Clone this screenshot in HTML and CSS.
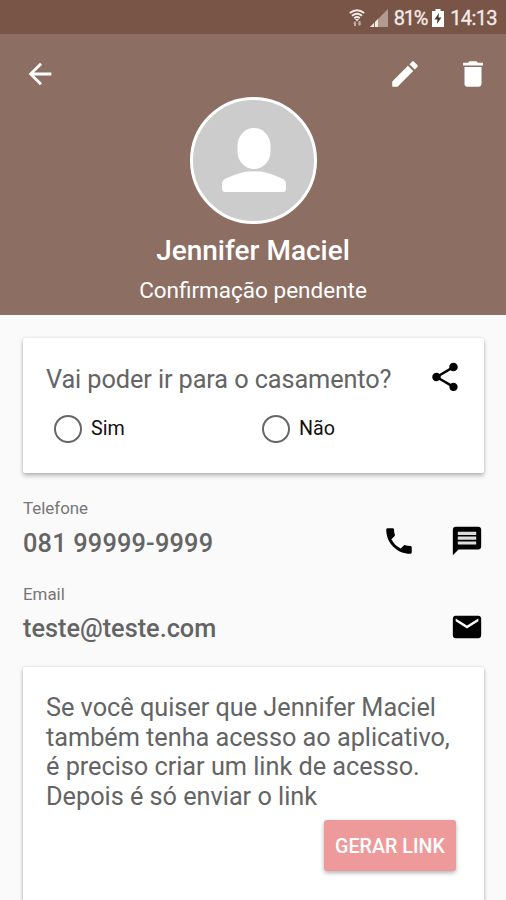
FILE: index.html
```html
<!DOCTYPE html>
<html lang="pt-BR">
<head>
    <meta charset="UTF-8">
    <meta name="viewport" content="width=device-width, initial-scale=1.0">
    <title>Jennifer Maciel</title>
    <link rel="stylesheet" href="styles.css">
</head>
<body>

    <!-- Status bar -->
    <div class="status-bar">
        <svg class="status-wifi" viewBox="0 0 16 18">
            <g fill="none" stroke="#f3e9e4" stroke-width="1.9">
                <path d="M0.8 4Q8-1.5 15.2 4"/>
                <path d="M3 6.8Q8 2.8 13 6.8"/>
                <path d="M5.2 9.2Q8 7 10.8 9.2"/>
            </g>
            <path fill="#f3e9e4" d="M6 10h4l-2 2.600z"/>
            <path fill="#c3aaa0" d="M4 14.500l2-2.500 1.600 2.500H7v2.500H5v-2.500zM8.500 14.500h1V12h2v2.500h1l-2 2.500z"/>
        </svg>
        <svg class="status-signal" viewBox="0 0 18 18">
            <path fill="#b39a90" d="M18 0v18H0z"/>
            <path fill="#f3e9e4" d="M8 10v8H0z"/>
            <path fill="none" stroke="#795548" stroke-width="0.8" d="M4.500 12v6"/>
        </svg>
        <span class="status-text battery-level">81%</span>
        <svg class="status-battery" viewBox="0 0 12 18">
            <path fill="#fff" d="M3.500 0h5v2H12v16H0V2h3.500z"/>
            <path fill="#4e342e" d="M7 4L2.500 10.500h3L4.800 15l4.700-6.500h-3z"/>
        </svg>
        <span class="status-text clock">14:13</span>
    </div>

    <!-- Guest header -->
    <div class="header">
        <div class="toolbar">
            <svg class="icon" viewBox="0 0 24 24"><path d="M20 11H7.830l5.590-5.590L12 4l-8 8 8 8 1.410-1.410L7.830 13H20v-2z"/></svg>
            <div class="toolbar-actions">
                <svg class="icon" viewBox="0 0 24 24"><path d="M3 17.250V21h3.750L17.810 9.940l-3.750-3.750L3 17.250zM20.710 7.040c.39-.39.39-1.020 0-1.410l-2.340-2.340c-.39-.39-1.020-.39-1.410 0l-1.830 1.830 3.750 3.750 1.830-1.830z"/></svg>
                <svg class="icon" viewBox="0 0 24 24"><path d="M6 19c0 1.100.9 2 2 2h8c1.100 0 2-.9 2-2V7H6v12zM19 4h-3.500l-1-1h-5l-1 1H5v2h14V4z"/></svg>
            </div>
        </div>
        <div class="avatar">
            <svg class="avatar-person" viewBox="0 0 64 65">
                <rect x="15.500" y="0" width="33" height="41" rx="16.500" ry="17.500"/>
                <path d="M0 56c0-3 1.500-4.500 5-6C12 47 20 44 26 43.500h12c6 .5 14 3.500 21 6.500 3.500 1.500 5 3 5 6v5c0 2-1 3-3 3H3c-2 0-3-1-3-3z"/>
            </svg>
        </div>
        <h1 class="guest-name">Jennifer Maciel</h1>
        <p class="guest-status">Confirmação pendente</p>
    </div>

    <div class="content">
        <!-- Attendance question -->
        <div class="card question-card">
            <div class="question-row">
                <p class="question">Vai poder ir para o casamento?</p>
                <svg class="icon" viewBox="0 0 24 24"><path d="M18 16.080c-.76 0-1.440.3-1.960.77L8.910 12.700c.05-.23.09-.46.09-.7s-.04-.47-.09-.7l7.050-4.110c.54.5 1.250.81 2.040.81 1.660 0 3-1.340 3-3s-1.340-3-3-3-3 1.340-3 3c0 .24.04.47.09.7L8.040 9.810C7.500 9.310 6.790 9 6 9c-1.660 0-3 1.340-3 3s1.340 3 3 3c.79 0 1.500-.31 2.040-.81l7.120 4.160c-.05.21-.08.43-.08.65 0 1.610 1.310 2.920 2.920 2.920s2.920-1.310 2.920-2.920-1.310-2.920-2.920-2.920z"/></svg>
            </div>
            <div class="options">
                <label class="option"><input type="radio" name="presenca" class="radio">Sim</label>
                <label class="option"><input type="radio" name="presenca" class="radio">Não</label>
            </div>
        </div>

        <!-- Contact details -->
        <div class="contact">
            <div>
                <p class="contact-label">Telefone</p>
                <p class="contact-value phone">081 99999-9999</p>
            </div>
            <div class="contact-actions">
                <svg class="icon" viewBox="0 0 24 24"><path d="M6.620 10.790c1.440 2.830 3.760 5.140 6.590 6.590l2.200-2.200c.27-.27.67-.36 1.020-.24 1.120.37 2.330.57 3.570.57.55 0 1 .45 1 1V20c0 .55-.45 1-1 1-9.390 0-17-7.610-17-17 0-.55.45-1 1-1h3.500c.55 0 1 .45 1 1 0 1.250.2 2.450.57 3.570.11.35.03.74-.25 1.020l-2.200 2.200z"/></svg>
                <svg class="icon" viewBox="0 0 24 24">
                    <path d="M20 2H4c-1.100 0-1.990.9-1.990 2L2 22l4-4h14c1.100 0 2-.9 2-2V4c0-1.100-.9-2-2-2z"/>
                    <path class="chat-lines" d="M5.500 5.500h13v2.300h-13zM5.500 8.900h13v2.300h-13zM5.500 12.300h13v2.200h-13z"/>
                </svg>
            </div>
        </div>
        <div class="contact">
            <div>
                <p class="contact-label">Email</p>
                <p class="contact-value">teste@teste.com</p>
            </div>
            <div class="contact-actions">
                <svg class="icon" viewBox="0 0 24 24"><path d="M20 4H4c-1.100 0-1.990.9-1.990 2L2 18c0 1.100.9 2 2 2h16c1.100 0 2-.9 2-2V6c0-1.100-.9-2-2-2zm0 4l-8 5-8-5V6l8 5 8-5v2z"/></svg>
            </div>
        </div>

        <!-- Access link -->
        <div class="card link-card">
            <p class="link-text">Se você quiser que Jennifer Maciel<br>também tenha acesso ao aplicativo,<br>é preciso criar um link de acesso.<br>Depois é só enviar o link</p>
            <button class="link-button">GERAR LINK</button>
        </div>
    </div>

</body>
</html>
```
FILE: styles.css
```css
* { box-sizing: border-box; }
body {
    margin: 0;
    height: 900px;
    overflow: hidden;
    font-family: Roboto, "Liberation Sans", sans-serif;
    background-color: #fafafa;
    color: #646464;
}
h1, p { margin: 0; }
.icon {
    display: block;
    width: 34px;
    height: 34px;
    flex-shrink: 0;
    fill: #000;
}

.status-bar {
    display: flex;
    align-items: center;
    justify-content: flex-end;
    height: 34px;
    padding: 1px 9px 0 0;
    background-color: #795548;
}
.status-wifi { width: 16px; height: 18px; margin-right: 5px; }
.status-signal { width: 18px; height: 18px; margin-right: 6px; }
.status-battery { width: 12px; height: 18px; margin-right: 6px; }
.status-text {
    font-size: 20px;
    line-height: 24px;
    color: #f6ece7;
    -webkit-text-stroke: 0.3px #f6ece7;
}
.battery-level { margin-right: 5px; letter-spacing: -1.2px; }
.clock { letter-spacing: -0.6px; }

.header {
    display: flex;
    flex-direction: column;
    align-items: center;
    height: 281px;
    background-color: #8d6e63;
    color: #fff;
}
.header .icon { fill: #fff; }
.toolbar {
    display: flex;
    justify-content: space-between;
    width: 100%;
    height: 63px;
    padding: 23px 16px 0 23px;
}
.toolbar-actions { display: flex; gap: 34px; }
.avatar {
    width: 127px;
    height: 127px;
    padding: 28px 0 0 29px;
    border: 3px solid #fff;
    border-radius: 50%;
    background-color: #ccc;
}
.avatar-person { display: block; width: 64px; height: 65px; fill: #fff; }
.guest-name {
    margin-top: 10px;
    font-size: 28px;
    font-weight: 500;
    line-height: 34px;
}
.guest-status {
    margin-top: 8px;
    font-size: 22.5px;
    line-height: 28px;
}

.content { padding: 23px 22px 0 23px; }
.card {
    background: #fff;
    border-radius: 2px;
    box-shadow: 0 3px 4px rgba(0, 0, 0, 0.24), 0 0 3px rgba(0, 0, 0, 0.14);
}
.question-card { height: 135px; padding: 22px 22px 0 23px; }
.question-row {
    display: flex;
    align-items: center;
    justify-content: space-between;
    height: 34px;
}
.question { padding-top: 4px; font-size: 25.3px; letter-spacing: -0.1px; }
.options { display: flex; margin-top: 20px; padding-left: 8px; }
.option {
    display: flex;
    flex-shrink: 0;
    align-items: center;
    width: 208px;
    font-size: 19.7px;
    line-height: 28px;
    padding-top: 1px;
    color: #111;
}
.option:last-child { width: auto; }
.radio {
    appearance: none;
    width: 28px;
    height: 28px;
    margin: 0 9px 0 0;
    border: 2.5px solid #666;
    border-radius: 50%;
}

.contact {
    display: flex;
    justify-content: space-between;
    height: 86px;
}
.question-card + .contact { margin-top: 25px; }
.contact-label { font-size: 16.9px; line-height: 20px; color: #777; }
.contact-value {
    margin-top: 10px;
    font-size: 25.3px;
    font-weight: 500;
    line-height: 30px;
}
.phone { margin-top: 11px; letter-spacing: 0.2px; }
.chat-lines { fill: #ddd; }
.contact-actions {
    display: flex;
    gap: 34px;
    padding-top: 26px;
}

.link-card {
    height: 260px;
    margin-top: -3px;
    padding: 26px 28px 0 23px;
}
.link-text { font-size: 25.3px; line-height: 29.6px; letter-spacing: -0.03px; }
.link-button {
    display: block;
    width: 132px;
    height: 51px;
    margin: 9px 0 0 auto;
    padding: 2px 0 0;
    border: none;
    border-radius: 3px;
    background-color: #ef9a9a;
    box-shadow: 0 2px 4px rgba(0, 0, 0, 0.3);
    font-family: inherit;
    font-size: 19.7px;
    font-weight: 500;
    color: #fff;
}
```
